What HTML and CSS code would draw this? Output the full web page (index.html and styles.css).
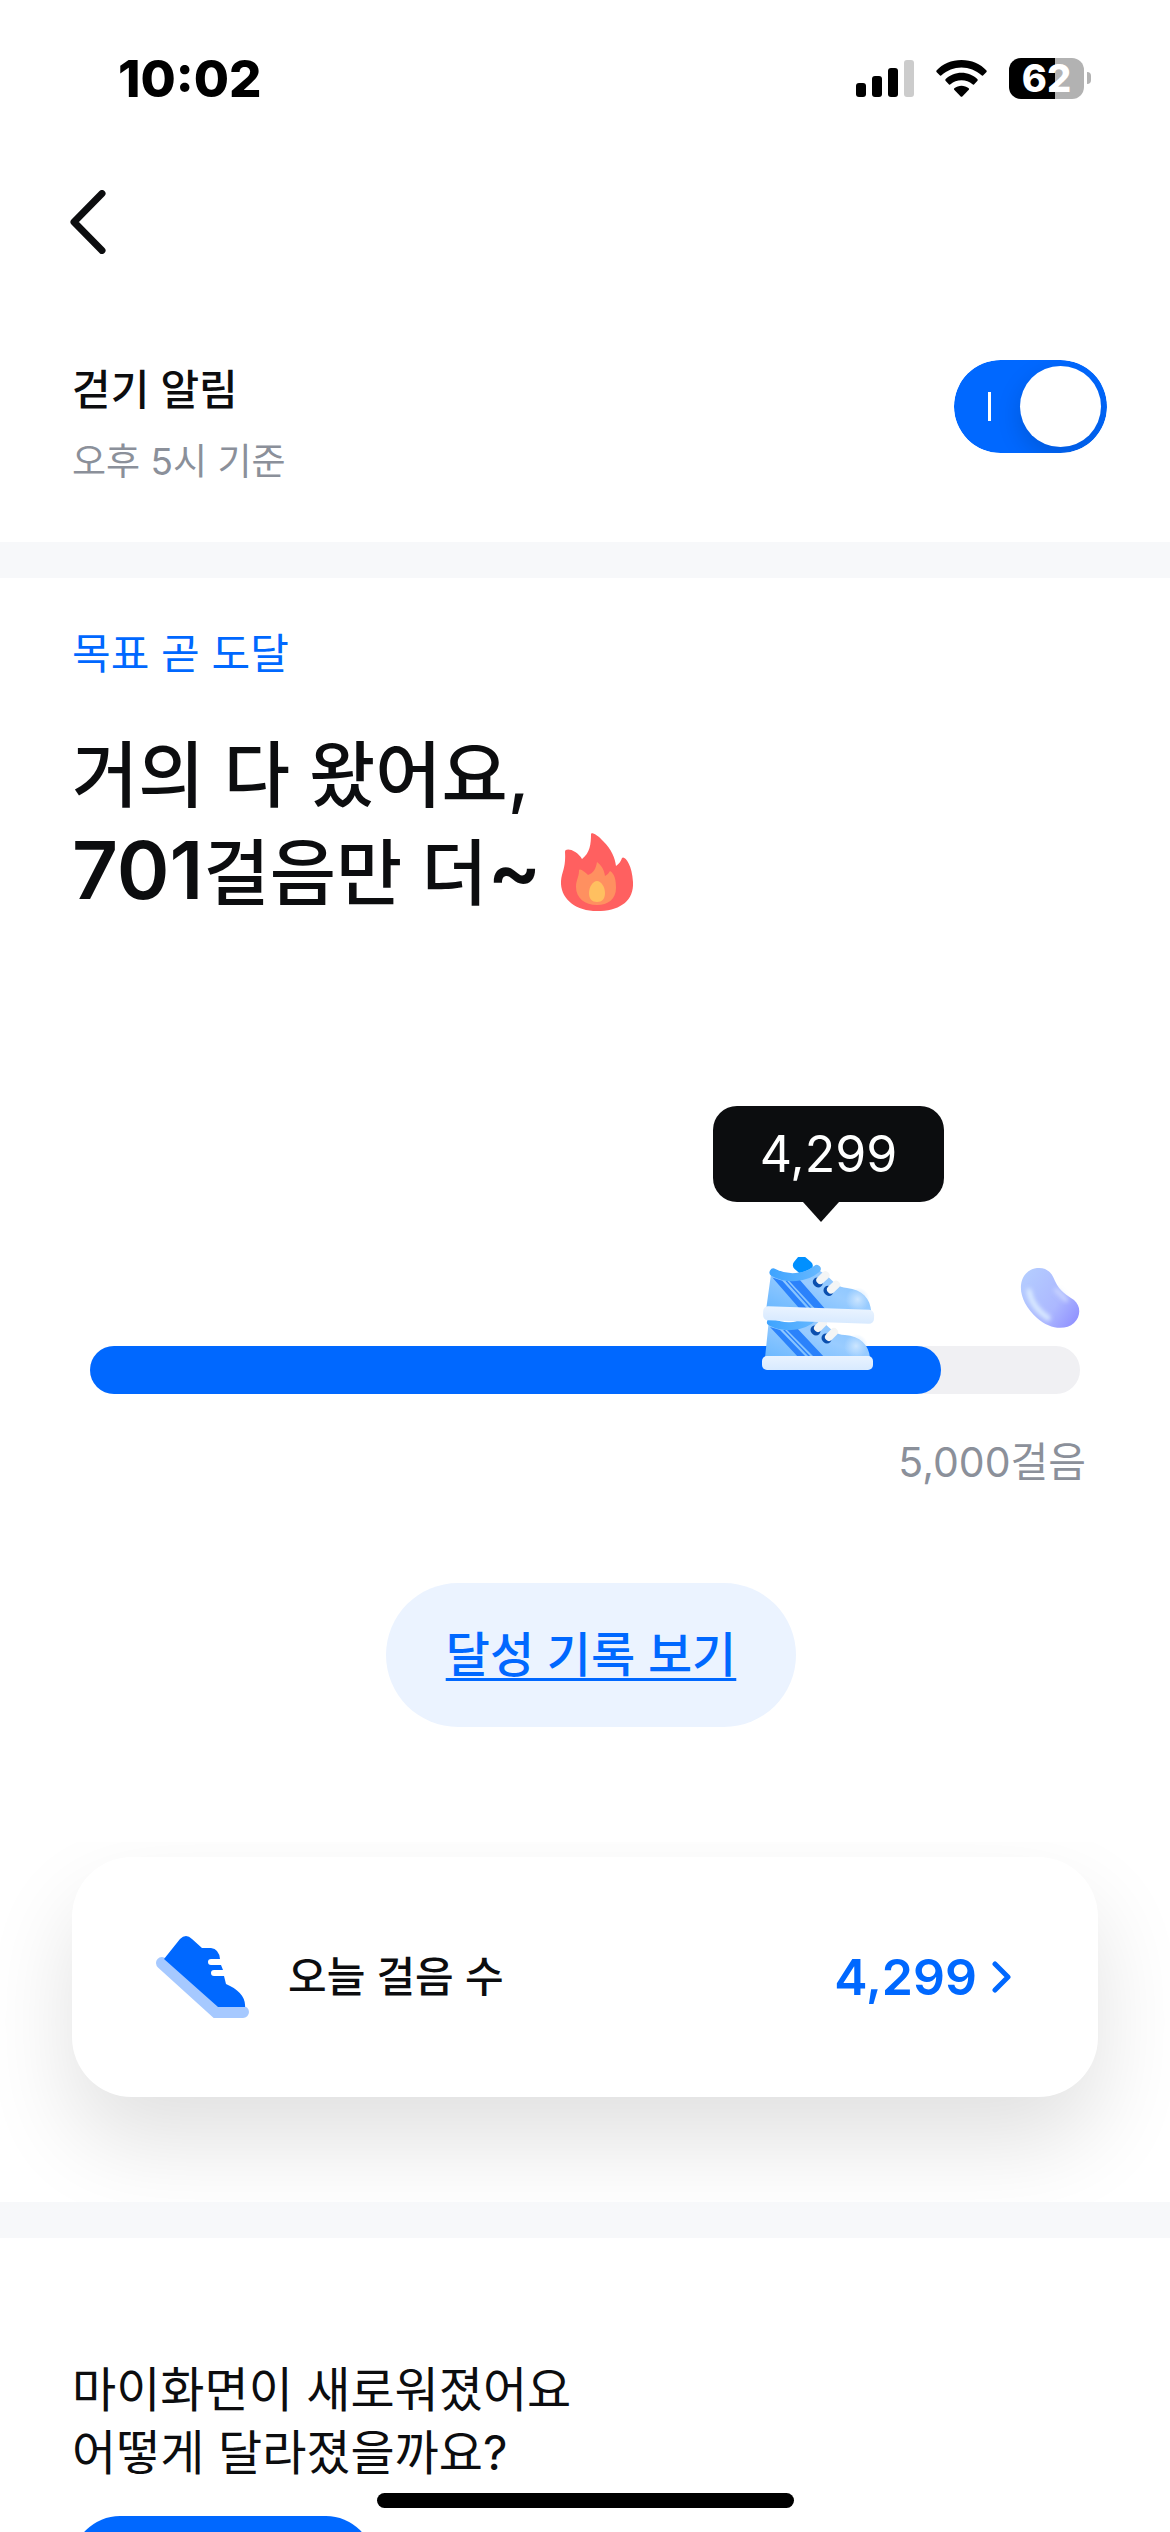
FILE: index.html
```html
<!DOCTYPE html>
<html lang="ko">
<head>
  <meta charset="UTF-8">
  <meta name="viewport" content="width=device-width, initial-scale=1.0">
  <title>걷기</title>
  <link rel="stylesheet" href="styles.css">
</head>

<body>
  <div class="screen">
    <header class="status-bar">
      <span class="time">10:02</span>
      <div class="status-icons">
        <svg width="58" height="37" viewBox="0 0 58 37">
          <rect x="0" y="23" width="10" height="14" rx="3" />
          <rect x="16" y="16" width="10" height="21" rx="3" />
          <rect x="32" y="8" width="10" height="29" rx="3" />
          <rect x="48" y="0" width="10" height="37" rx="3" fill="#cccccc" />
        </svg>
        <svg width="51" height="37" viewBox="0 0 51 37">
          <path d="M25.500 0C35.500 0 44.500 4 50.500 10.500Q51 11.300 50.500 12L47 15.500Q46.300 16 45.500 15.300C40 10.500 33 7.500 25.500 7.500S11 10.500 5.500 15.300Q4.700 16 4 15.500L.5 12Q0 11.300.5 10.500C6.500 4 15.500 0 25.500 0Z" />
          <path d="M25.500 12.800C31.500 12.800 37.500 15.300 41.500 19.300Q42 20 41.500 20.700L38 24.500Q37.300 25 36.500 24.300C33.500 21.700 29.700 20.200 25.500 20.200S17.500 21.700 14.500 24.300Q13.700 25 13 24.500L9.500 20.700Q9 20 9.500 19.300C13.500 15.300 19.500 12.800 25.500 12.800Z" />
          <path d="M25.500 25.800C28 25.800 30.700 26.700 32.700 28.300Q33.400 29 32.800 29.700L26.300 36.500Q25.500 37.200 24.700 36.500L18.200 29.700Q17.600 29 18.300 28.300C20.300 26.700 23 25.800 25.500 25.800Z" />
        </svg>
        <div class="battery">
          <span class="battery-body">62</span>
          <span class="battery-tip"></span>
        </div>
      </div>
    </header>

    <nav class="nav-bar">
      <button class="back" type="button" aria-label="뒤로">
        <svg width="36" height="64" viewBox="0 0 36 64">
          <path d="M32 3.500L4 32L32 60.500" fill="none" stroke="#0c0d0f" stroke-width="7" stroke-linecap="round" stroke-linejoin="round" />
        </svg>
      </button>
    </nav>

    <section class="alarm">
      <label class="alarm-text" for="walkAlarm">
        <span class="alarm-title">걷기 알림</span>
        <span class="alarm-sub">오후 5시 기준</span>
      </label>
      <input class="toggle" type="checkbox" id="walkAlarm" checked>
    </section>

    <div class="divider"></div>

    <main class="goal">
      <p class="goal-state">목표 곧 도달</p>
      <h1>거의 다 왔어요,<br><span class="count">701</span>걸음만 더<span class="count">~</span>
        <svg class="fire" width="72" height="78" viewBox="0 0 72 78">
          <path d="M30 1C30-1 36 1 42 8C51 17 54 25 55 33C58 31 60 28 61 25C63 22 71 30 72 49C73 68 59 78 36 78C14 78-1 65 0 48C1 38 5 35 4 19C4 14 16 17 21 26C29 20 30 11 30 1Z" fill="#ff6060" />
          <path d="M36 29C40 32 43 36 44 43Q47 42 49 38C54 41 55 48 55 55C55 66 47 72 36 72C24 72 15 65 15 54C15 47 18 44 18 38C18 34 24 39 27 42C33 40 35 35 36 29Z" fill="#ff9060" />
          <path d="M36 48C40 48 44 54 44 60C44 66 41 69 36 69S28 66 28 60C28 54 32 48 36 48Z" fill="#ffc060" />
        </svg>
      </h1>

      <div class="progress">
        <div class="bubble">4,299</div>
        <svg class="shoes" width="116" height="114" viewBox="0 0 116 114">
          <defs>
            <linearGradient id="upper" x1="0" y1="1" x2="1" y2="0">
              <stop offset="0" stop-color="#6bb8ff" />
              <stop offset=".5" stop-color="#99ccff" />
              <stop offset="1" stop-color="#80c0ff" />
            </linearGradient>
            <linearGradient id="collar" gradientUnits="userSpaceOnUse" x1="8" y1="0" x2="56" y2="0">
              <stop offset="0" stop-color="#3fa4ff" />
              <stop offset="1" stop-color="#66b8ff" />
            </linearGradient>
            <linearGradient id="sole" x1="0" y1="0" x2="0" y2="1">
              <stop offset="0" stop-color="#e9f3ff" />
              <stop offset="1" stop-color="#d8eaff" />
            </linearGradient>
            <radialGradient id="toe">
              <stop offset="0" stop-color="#cde6ff" />
              <stop offset="1" stop-color="#c4e1ff" stop-opacity="0" />
            </radialGradient>
            <g id="shoe">
              <rect x="30" y="1" width="18" height="16" rx="5" transform="rotate(38 39 9)" fill="#0090ff" />
              <path d="M8 14C24 21 38 18 50 10L63 18C70 24 75 30 84 30C99 31 108 40 109 53H4Z" fill="url(#upper)" />
              <path d="M9 22L19 25L46 53H38ZM22 25H24L51 53H49ZM26 25L35 22L64 53H54Z" fill="#2b82fb" />
              <circle cx="95" cy="41" r="12" fill="url(#toe)" />
              <path d="M10 17C24 24 42 22 53 12" fill="none" stroke="url(#collar)" stroke-width="8" stroke-linecap="round" />
              <path d="M54 25l1 1M65 33l1 1" stroke="#0b4fae" stroke-width="9" stroke-linecap="round" />
              <path d="M57 23l5-5M68 32l5-5" stroke="#f4f5f5" stroke-width="8" stroke-linecap="round" />
              <rect x="1" y="51" width="111" height="14" rx="5" fill="url(#sole)" />
            </g>
          </defs>
          <use href="#shoe" y="48" />
          <use href="#shoe" x="2" transform="rotate(2 57 32)" />
        </svg>
        <svg class="bean" width="60" height="62" viewBox="0 0 60 62">
          <defs>
            <linearGradient id="beanFill" x1="0" y1=".2" x2="1" y2=".9">
              <stop offset="0" stop-color="#b4ccff" />
              <stop offset=".6" stop-color="#acb8ff" />
              <stop offset="1" stop-color="#8e8eff" />
            </linearGradient>
            <filter id="soft" x="-50%" y="-50%" width="200%" height="200%">
              <feGaussianBlur stdDeviation="2" />
            </filter>
          </defs>
          <path d="M17 1C27 0 32 6 35 14C40 25 47 28 54 33C61 39 61 49 54 56C45 64 29 62 17 51C6 41 0 29 1 18C2 8 9 2 17 1Z" fill="url(#beanFill)" />
          <path d="M9 24C11 36 19 45 28 51" fill="none" stroke="#dcecff" stroke-width="5" stroke-linecap="round" filter="url(#soft)" />
          <path d="M36 23L46 33" fill="none" stroke="#ccd7ff" stroke-width="4" stroke-linecap="round" filter="url(#soft)" />
        </svg>
        <div class="track">
          <div class="fill" style="width: 86%"></div>
        </div>
        <p class="target">5,000걸음</p>
      </div>

      <div class="record-row">
        <a class="record" href="#record">달성 기록 보기</a>
      </div>
    </main>

    <section class="today">
      <a class="card" href="#today">
        <svg width="94" height="83" viewBox="0 0 94 83">
          <path d="M6 27L60 76H87" fill="none" stroke="#a6c9ff" stroke-width="12" stroke-linecap="round" />
          <path d="M8 23L24 3Q30-3 36 3L46 12H55Q63 13 64 23H55A3 3 0 0 0 55 29H65L67 34H58A3 3 0 0 0 58 40H68L70 48C82 53 90 61 89 71H62Z" fill="#0068ff" />
        </svg>
        <span class="card-label">오늘 걸음 수</span>
        <span class="card-value">4,299</span>
        <svg width="20" height="32" viewBox="0 0 20 32">
          <path d="M3 3L16 16L3 29" fill="none" stroke="#0068ff" stroke-width="5" stroke-linecap="round" stroke-linejoin="round" />
        </svg>
      </a>
    </section>

    <div class="divider"></div>

    <section class="notice">
      <p>마이화면이 새로워졌어요<br>어떻게 달라졌을까요?</p>
      <button class="notice-button" type="button" aria-label="자세히 보기"></button>
    </section>

    <div class="home-indicator"></div>
  </div>
</body>

</html>
```
FILE: styles.css
```css
* {
  box-sizing: border-box;
}

body {
  margin: 0;
  background-color: #fff;
  color: #0c0d0f;
  font-family: Inter, "Noto Sans CJK KR", sans-serif;
}

h1,
p {
  margin: 0;
}

button {
  border: none;
  padding: 0;
  background: none;
  cursor: pointer;
}

a {
  color: #0068ff;
}

svg {
  flex: none;
}

.screen {
  position: relative;
  height: 100vh;
  overflow: hidden;
}

.status-bar {
  display: flex;
  justify-content: space-between;
  align-items: center;
  height: 156px;
  padding: 0 79px 0 118px;
}

.time {
  color: #000;
  font-size: 51px;
  font-weight: 800;
}

.status-icons {
  display: flex;
  align-items: center;
  gap: 22px;
}

.battery {
  display: flex;
  align-items: center;
  gap: 3px;
}

.battery-body {
  width: 75px;
  height: 41px;
  border-radius: 12px;
  background: linear-gradient(90deg, #000 62%, #b2b2b2 62%);
  color: #fff;
  font-size: 38px;
  font-weight: 800;
  line-height: 41px;
  text-align: center;
}

.battery-tip {
  width: 4px;
  height: 12px;
  border-radius: 0 4px 4px 0;
  background-color: #b2b2b2;
}

.nav-bar {
  display: flex;
  align-items: center;
  height: 132px;
  padding: 0 70px;
}

.back {
  display: flex;
}

.alarm {
  display: flex;
  justify-content: space-between;
  padding: 72px 63px 0 72px;
  height: 254px;
}

.alarm-text {
  display: flex;
  flex-direction: column;
  gap: 12px;
}

.alarm-title {
  font-size: 42px;
  font-weight: 500;
  line-height: 60px;
}

.alarm-sub {
  color: #8b909a;
  font-size: 37px;
  line-height: 60px;
}

.toggle {
  appearance: none;
  display: flex;
  align-items: center;
  justify-content: space-between;
  width: 153px;
  height: 93px;
  margin: 0;
  padding: 0 6px 0 34px;
  border-radius: 47px;
  background-color: #0068ff;
  clip-path: inset(0 round 47px);
}

.toggle::before {
  content: "";
  width: 3px;
  height: 29px;
  background-color: #fff;
}

.toggle::after {
  content: "";
  width: 81px;
  height: 81px;
  border-radius: 50%;
  background-color: #fff;
  box-shadow: 0 9px 24px rgba(0, 0, 0, 0.15);
}

.divider {
  height: 36px;
  background-color: #f7f8fa;
}

.goal {
  padding: 46px 72px 115px;
}

.goal-state {
  color: #0068ff;
  font-size: 42px;
  line-height: 60px;
}

h1 {
  margin-top: 42px;
  font-size: 72px;
  font-weight: 500;
  line-height: 98px;
}

.count {
  font-size: 80px;
  font-weight: 600;
  line-height: 1;
}

.fire {
  vertical-align: -12px;
}

.progress {
  position: relative;
  margin: 424px 18px 0;
}

.track {
  height: 48px;
  border-radius: 24px;
  background-color: #f0f0f3;
}

.fill {
  height: 48px;
  border-radius: 24px;
  background-color: #0068ff;
}

.bubble {
  position: absolute;
  right: 136px;
  bottom: 290px;
  width: 231px;
  border-radius: 24px;
  background-color: #0c0d0f;
  color: #fff;
  font-size: 50px;
  line-height: 96px;
  text-align: center;
}

.bubble::after {
  content: "";
  position: absolute;
  top: 96px;
  left: 90px;
  border: 18px solid transparent;
  border-top: 20px solid #0c0d0f;
  border-bottom: none;
}

.shoes {
  position: absolute;
  right: 203px;
  bottom: 121px;
}

.bean {
  position: absolute;
  right: 0;
  bottom: 163px;
}

.target {
  padding-top: 38px;
  margin-right: -6px;
  color: #8b909a;
  font-size: 41px;
  line-height: 60px;
  text-align: right;
}

.record-row {
  display: flex;
  justify-content: center;
  margin-top: 91px;
  padding-left: 12px;
}

.record {
  padding: 0 60px;
  border-radius: 72px;
  background-color: #ebf3ff;
  font-size: 48px;
  font-weight: 500;
  line-height: 144px;
  text-underline-offset: 6px;
  text-decoration-thickness: 3px;
}

.today {
  overflow: hidden;
  padding: 15px 72px 105px;
}

.card {
  display: flex;
  align-items: center;
  height: 240px;
  padding: 0 86px 0 84px;
  border-radius: 60px;
  background-color: #fff;
  box-shadow: 0 45px 90px rgba(0, 0, 0, 0.12);
  text-decoration: none;
}

.card-label {
  flex: 1;
  margin-left: 38px;
  color: #0c0d0f;
  font-size: 42px;
  font-weight: 500;
  line-height: 60px;
}

.card-value {
  margin-right: 15px;
  font-size: 50px;
  font-weight: 600;
  line-height: 60px;
}

.notice {
  padding: 120px 72px 0;
}

.notice p {
  font-size: 48px;
  line-height: 63px;
}

.notice-button {
  display: block;
  width: 302px;
  height: 108px;
  margin-top: 32px;
  border-radius: 48px;
  background-color: #0068ff;
}

.home-indicator {
  position: absolute;
  bottom: 24px;
  left: 50%;
  width: 417px;
  height: 15px;
  margin-left: -208px;
  border-radius: 8px;
  background-color: #000;
}
```
